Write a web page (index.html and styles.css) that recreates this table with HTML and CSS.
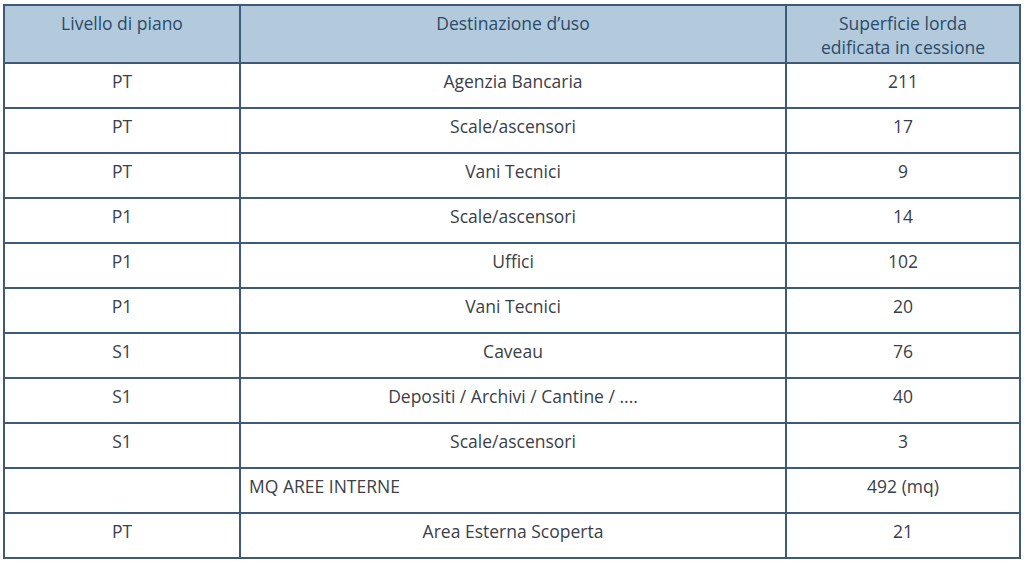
FILE: index.html
```html
<!DOCTYPE html>
<html lang="it">
<head>
<meta charset="utf-8">
<title>Tabella superfici</title>
<link rel="stylesheet" href="styles.css">
</head>
<body>
<table class="tab">
  <colgroup>
    <col class="c1"><col class="c2"><col class="c3">
  </colgroup>
  <thead>
    <tr>
      <th>Livello di piano</th>
      <th>Destinazione d’uso</th>
      <th>Superficie lorda<br>edificata in cessione</th>
    </tr>
  </thead>
  <tbody>
    <tr><td>PT</td><td>Agenzia Bancaria</td><td>211</td></tr>
    <tr><td>PT</td><td>Scale/ascensori</td><td>17</td></tr>
    <tr><td>PT</td><td>Vani Tecnici</td><td>9</td></tr>
    <tr><td>P1</td><td>Scale/ascensori</td><td>14</td></tr>
    <tr><td>P1</td><td>Uffici</td><td>102</td></tr>
    <tr><td>P1</td><td>Vani Tecnici</td><td>20</td></tr>
    <tr><td>S1</td><td>Caveau</td><td>76</td></tr>
    <tr><td>S1</td><td>Depositi / Archivi / Cantine / ....</td><td>40</td></tr>
    <tr><td>S1</td><td>Scale/ascensori</td><td>3</td></tr>
    <tr><td></td><td class="left">MQ AREE INTERNE</td><td>492 (mq)</td></tr>
    <tr><td>PT</td><td>Area Esterna Scoperta</td><td>21</td></tr>
  </tbody>
</table>
</body>
</html>
```

FILE: styles.css
```css
html, body {
  margin: 0;
  padding: 0;
  background: #ffffff;
}

body {
  padding: 4px 0 0 3px;
  font-family: "Open Sans", "Liberation Sans", sans-serif;
}

.tab {
  border-collapse: collapse;
  width: 1016px;
  table-layout: fixed;
  border: 2px solid #3f5a79;
}

.c1 { width: 236px; }
.c2 { width: 546px; }
.c3 { width: 234px; }

.tab th,
.tab td {
  border: 2px solid #3f5a79;
  text-align: center;
  vertical-align: top;
  font-size: 17.5px;
  line-height: 24px;
  padding: 5px 8px 0 8px;
}

.tab th {
  background: #b2cadb;
  color: #2c4a69;
  font-weight: 400;
  height: 51px;
  padding-top: 5px;
}

.tab td {
  color: #3b4048;
  height: 38px;
}

.tab td.left {
  text-align: left;
}
```
